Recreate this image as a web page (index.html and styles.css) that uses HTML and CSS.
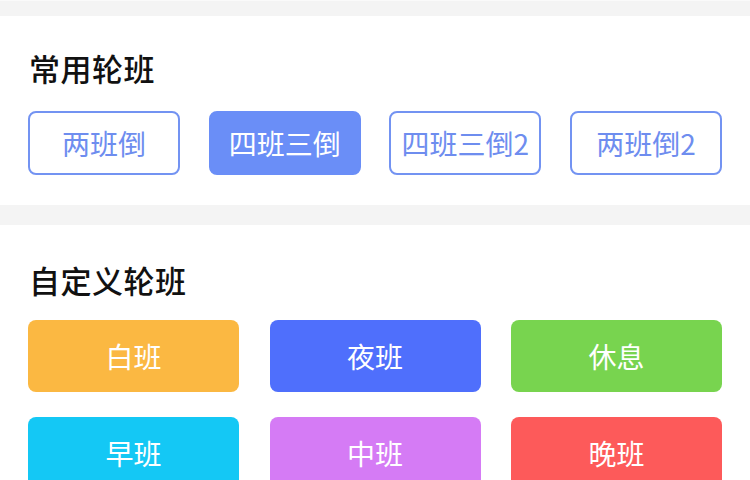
FILE: index.html
```html
<!DOCTYPE html>
<html lang="zh">
<head>
<meta charset="utf-8">
<link rel="stylesheet" href="styles.css">
</head>
<body>
<div class="page">
  <div class="band band-top"></div>
  <section class="section common">
    <h2 class="title">常用轮班</h2>
    <div class="row">
      <div class="opt">两班倒</div>
      <div class="opt active">四班三倒</div>
      <div class="opt">四班三倒2</div>
      <div class="opt">两班倒2</div>
    </div>
  </section>
  <div class="band"></div>
  <section class="section custom">
    <h2 class="title">自定义轮班</h2>
    <div class="grid">
      <div class="shift orange">白班</div>
      <div class="shift blue">夜班</div>
      <div class="shift green">休息</div>
      <div class="shift cyan">早班</div>
      <div class="shift purple">中班</div>
      <div class="shift red">晚班</div>
    </div>
  </section>
</div>
</body>
</html>
```
FILE: styles.css
```css
* { box-sizing: border-box; }
html, body { margin: 0; padding: 0; background: #fff; }
body {
  font-family: "Noto Sans CJK SC", "Noto Sans", sans-serif;
  width: 750px;
  height: 480px;
  overflow: hidden;
}
.page { width: 750px; }
.band { height: 20px; background: #f4f4f4; }
.band-top { height: 16px; border-top: 1px solid #fafafa; }
.section { background: #fff; padding: 0 28px; }
.common { height: 189px; padding-top: 31px; }
.custom { padding-top: 34px; }
.title {
  margin: 0;
  font-size: 31px;
  font-weight: 500;
  color: #111;
  line-height: 42px;
  padding-left: 1px;
  letter-spacing: 0.5px;
}
.row {
  display: flex;
  justify-content: space-between;
  margin-top: 22px;
}
.opt {
  width: 152px;
  height: 64px;
  border: 2px solid #7393f2;
  border-radius: 8px;
  color: #6e8def;
  font-size: 28px;
  display: flex;
  align-items: center;
  justify-content: center;
}
.opt.active {
  background: #6a8ef7;
  border-color: #6a8ef7;
  color: #fff;
}
.grid {
  display: grid;
  grid-template-columns: repeat(3, 211px);
  justify-content: space-between;
  row-gap: 25px;
  margin-top: 19px;
}
.shift {
  height: 72px;
  border-radius: 8px;
  color: #fff;
  font-size: 28px;
  display: flex;
  align-items: center;
  justify-content: center;
}
.orange { background: #fbb842; }
.blue { background: #4f6ffc; }
.green { background: #78d44f; }
.cyan { background: #14c8f5; }
.purple { background: #d57bf5; }
.red { background: #fd5a5a; }
```
